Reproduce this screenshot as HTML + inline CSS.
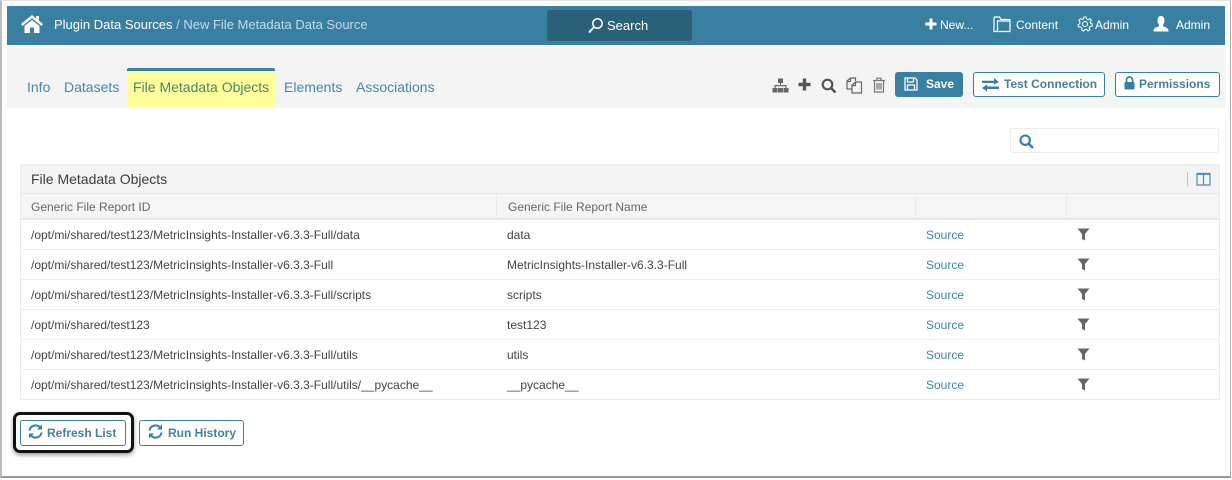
<!DOCTYPE html>
<html><head><meta charset="utf-8">
<style>
html,body{margin:0;padding:0;background:#fff}
body{width:1232px;height:480px;position:relative;overflow:hidden;font-family:"Liberation Sans",sans-serif}
.a{position:absolute;white-space:nowrap}
svg{position:absolute;display:block}
.tab{position:absolute;top:78px;font-size:14px;line-height:18px;color:#4a86a6;white-space:nowrap}
.hd{position:absolute;top:17px;font-size:12px;line-height:16px;color:#fff;white-space:nowrap}
.btn{position:absolute;box-sizing:border-box;border:1px solid #3a7f9f;border-radius:3px;background:#fff;color:#4b7f98;font-weight:bold;font-size:12px;white-space:nowrap}
.row{position:absolute;left:21px;width:1198px;height:29px;border-bottom:1px solid #eee;font-size:12px;line-height:31px;color:#444}
.row span{position:absolute;top:0;white-space:nowrap}
.row .s{left:905px;color:#3f84a8}
.row .i{left:10px}
.row .n{left:486px}
</style></head><body>
<div class="a" style="left:0;top:0;width:1231px;height:478px;box-sizing:border-box;border:1px solid #d8d8d8;border-left:2px solid #bbb;border-right:1px solid #aaa;border-bottom:2px solid #999;border-top:1px solid #e4e4e4"></div>
<div class="a" style="left:7px;top:6px;width:1218px;height:39px;background:#387fa1"></div>
<div class="a" style="left:7px;top:45px;width:1218px;height:63px;background:#f4f4f4"></div>

<svg style="left:21px;top:15px" width="22" height="18" viewBox="0 0 22 18"><path d="M11 0 L0 9 L1.500 11 L11 3.200 L20.500 11 L22 9 L18 5.800 V1 H15.200 V3.500 Z" fill="#fff"/><path d="M3.500 11 L11 5 L18.500 11 V18 H13 V12.500 H9 V18 H3.500 Z" fill="#fff"/></svg>
<div class="a" style="left:54px;top:16px;font-size:13px;line-height:18px;color:#fff">Plugin Data Sources<span style="color:#c5dbe6"> / New File Metadata Data Source</span></div>

<div class="a" style="left:547px;top:10px;width:145px;height:31px;background:#2b6079;border-radius:3px"></div>
<svg style="left:587px;top:17px" width="17" height="17" viewBox="0 0 17 17" fill="none" stroke="#fff"><circle cx="10.500" cy="6.500" r="4.700" stroke-width="1.500"/><path d="M7 10 L2 15.500" stroke-width="2"/></svg>
<div class="a" style="left:607px;top:17px;font-size:13px;line-height:17px;color:#fff">Search</div>

<svg style="left:925px;top:18px" width="12" height="12" viewBox="0 0 12 12"><path d="M4.500 0.500H7.500V4.500H11.500V7.500H7.500V11.500H4.500V7.500H0.500V4.500H4.500Z" fill="#fff"/></svg>
<div class="hd" style="left:940px">New...</div>
<svg style="left:993px;top:16px" width="20" height="17" viewBox="0 0 20 17" fill="none" stroke="#fff" stroke-width="1.200"><path d="M1 15.500V2.500Q1 1 2.500 1H6.500L8 3.500H17V15.500Z"/><path d="M4.500 15.500V5H17"/></svg>
<div class="hd" style="left:1016px">Content</div>
<svg style="left:1077px;top:16px" width="16" height="16" viewBox="0 0 16 16" fill="none" stroke="#fff"><circle cx="8" cy="8" r="2.500" stroke-width="1.100"/><path d="M6.800 1H9.200L9.600 3L11.200 3.700L13 2.600L14.400 4.300L13.100 5.900L13.600 7.400L15.300 8L15 10.300L13 10.500L12.100 12L12.900 13.800L11 15L9.600 13.500H8L6.600 15L4.700 14.100L5 12.200L3.700 11L1.500 11L1 8.700L2.800 7.800L3 6L1.900 4.300L3.500 2.700L5.200 3.500L6.500 2.800Z" stroke-width="1"/></svg>
<div class="hd" style="left:1095px">Admin</div>
<svg style="left:1153px;top:16px" width="16" height="16" viewBox="0 0 16 16"><path d="M8 0C5.500 0 4.500 2 4.500 4.500C4.500 6.500 5.500 8 6 8.800V10.200C4 11 0.800 11.700 0.500 14.500V15.500H15.500V14.500C15.200 11.700 12 11 10 10.200V8.800C10.500 8 11.500 6.500 11.500 4.500C11.500 2 10.500 0 8 0Z" fill="#fff"/></svg>
<div class="hd" style="left:1176px">Admin</div>

<div class="a" style="left:127px;top:69px;width:148px;height:38px;background:#ffff99"></div>
<div class="a" style="left:127px;top:68px;width:148px;height:3px;background:#387fa1;border-radius:2px 2px 0 0"></div>
<div class="tab" style="left:27px">Info</div>
<div class="tab" style="left:64px">Datasets</div>
<div class="tab" style="left:133px;color:#4a8570">File Metadata Objects</div>
<div class="tab" style="left:284px">Elements</div>
<div class="tab" style="left:356px">Associations</div>

<svg style="left:772px;top:78px" width="17" height="15" viewBox="0 0 17 15" fill="#666"><rect x="6" y="0.500" width="5" height="4.500"/><rect x="8" y="5" width="1" height="3"/><rect x="2.500" y="7" width="12" height="1.200"/><rect x="2.500" y="7" width="1.200" height="3"/><rect x="13.300" y="7" width="1.200" height="3"/><rect x="0.500" y="10" width="5" height="4.500"/><rect x="6" y="10" width="5" height="4.500"/><rect x="11.500" y="10" width="5" height="4.500"/></svg>
<svg style="left:798px;top:78px" width="13" height="13" viewBox="0 0 13 13"><path d="M4.800 0.500H8.200V4.800H12.500V8.200H8.200V12.500H4.800V8.200H0.500V4.800H4.800Z" fill="#555"/></svg>
<svg style="left:821px;top:78px" width="16" height="15" viewBox="0 0 16 15" fill="none" stroke="#555"><circle cx="6.500" cy="6.500" r="4.800" stroke-width="2.200"/><path d="M10 10L14.500 14.500" stroke-width="2.600"/></svg>
<svg style="left:846px;top:77px" width="17" height="17" viewBox="0 0 17 17" fill="none" stroke="#666" stroke-width="1.200"><path d="M6 12H1V4L4.500 1H9.500V4"/><path d="M4.500 1V4.500H1"/><path d="M6 16V8L9.500 5H15.500V16Z"/><path d="M9.500 5V8.500H6"/></svg>
<svg style="left:872px;top:77px" width="14" height="16" viewBox="0 0 14 16" fill="none" stroke="#777" stroke-width="1.200"><path d="M1 3.500H13M5 3V1.200H9V3M2.500 3.500V15H11.500V3.500M5 6V12.500M7 6V12.500M9 6V12.500"/></svg>

<div class="a" style="left:895px;top:72px;width:68px;height:25px;background:#387fa1;border-radius:3px"></div>
<svg style="left:904px;top:77px" width="14" height="14" viewBox="0 0 14 14" fill="none" stroke="#fff" stroke-width="1.300"><path d="M1 1H11L13 3V13H1Z"/><path d="M3.500 1V5H9.500V1M3.500 13V8H10.500V13"/></svg>
<div class="a" style="left:926px;top:77px;font-size:12px;line-height:15px;font-weight:bold;color:#fff">Save</div>

<div class="btn" style="left:973px;top:72px;width:132px;height:25px;line-height:22px;padding-left:30px">Test Connection</div>
<svg style="left:982px;top:78px" width="17" height="14" viewBox="0 0 17 14" fill="#387fa1"><path d="M0 3.200H12V0.500L17 4.500L12 7V5.500H0Z" transform="translate(0,-0.500)"/><path d="M17 8.500H5V6.500L0 10L5 13.500V11H17Z"/></svg>
<div class="btn" style="left:1115px;top:72px;width:105px;height:25px;line-height:22px;padding-left:23px">Permissions</div>
<svg style="left:1124px;top:76px" width="11" height="14" viewBox="0 0 11 14"><path d="M2.500 6V4A3 3 0 0 1 8.500 4V6" fill="none" stroke="#387fa1" stroke-width="1.700"/><rect x="0.500" y="6" width="10" height="7.500" rx="1" fill="#387fa1"/></svg>

<div class="a" style="left:1010px;top:128px;width:209px;height:25px;box-sizing:border-box;border:1px solid #eee;border-radius:2px"></div>
<svg style="left:1019px;top:134px" width="15" height="15" viewBox="0 0 15 15" fill="none" stroke="#387fa1"><circle cx="6.200" cy="6.200" r="4.700" stroke-width="2.100"/><path d="M9.500 9.500L14 14" stroke-width="2.500"/></svg>

<div class="a" style="left:20px;top:164px;width:1200px;height:236px;box-sizing:border-box;border:1px solid #ececec"></div>
<div class="a" style="left:21px;top:165px;width:1198px;height:28px;background:#f3f3f3;border-bottom:1px solid #e8e8e8"></div>
<div class="a" style="left:31px;top:170px;font-size:14px;line-height:18px;color:#3d3d3d">File Metadata Objects</div>
<div class="a" style="left:1187px;top:172px;width:1px;height:14px;background:#c4c4c4"></div>
<svg style="left:1196px;top:172px" width="15" height="14" viewBox="0 0 15 14" fill="none" stroke="#4b8db0" stroke-width="1.200"><path d="M1 1.500H14V13H1ZM7.500 1.500V13"/><path d="M1 2H14" stroke-width="1.800"/></svg>

<div class="a" style="left:21px;top:194px;width:1198px;height:24px;background:#f5f5f5;border-bottom:2px solid #e6e6e6"></div>
<div class="a" style="left:496px;top:194px;width:1px;height:24px;background:#ebebeb"></div>
<div class="a" style="left:915px;top:194px;width:1px;height:24px;background:#ebebeb"></div>
<div class="a" style="left:1066px;top:194px;width:1px;height:24px;background:#ebebeb"></div>
<div class="a" style="left:31px;top:199px;font-size:12px;line-height:16px;color:#666">Generic File Report ID</div>
<div class="a" style="left:508px;top:199px;font-size:12px;line-height:16px;color:#666">Generic File Report Name</div>

<div class="row" style="top:220px"><span class="i">/opt/mi/shared/test123/MetricInsights-Installer-v6.3.3-Full/data</span><span class="n">data</span><span class="s">Source</span></div>
<div class="row" style="top:250px"><span class="i">/opt/mi/shared/test123/MetricInsights-Installer-v6.3.3-Full</span><span class="n">MetricInsights-Installer-v6.3.3-Full</span><span class="s">Source</span></div>
<div class="row" style="top:280px"><span class="i">/opt/mi/shared/test123/MetricInsights-Installer-v6.3.3-Full/scripts</span><span class="n">scripts</span><span class="s">Source</span></div>
<div class="row" style="top:310px"><span class="i">/opt/mi/shared/test123</span><span class="n">test123</span><span class="s">Source</span></div>
<div class="row" style="top:340px"><span class="i">/opt/mi/shared/test123/MetricInsights-Installer-v6.3.3-Full/utils</span><span class="n">utils</span><span class="s">Source</span></div>
<div class="row" style="top:370px;border-bottom:none"><span class="i">/opt/mi/shared/test123/MetricInsights-Installer-v6.3.3-Full/utils/__pycache__</span><span class="n">__pycache__</span><span class="s">Source</span></div>

<svg style="left:1077px;top:228px" width="13" height="13" viewBox="0 0 13 13"><path d="M0.500 0.500H12.500L8 6V12.500L5 11V6Z" fill="#666"/></svg>
<svg style="left:1077px;top:258px" width="13" height="13" viewBox="0 0 13 13"><path d="M0.500 0.500H12.500L8 6V12.500L5 11V6Z" fill="#666"/></svg>
<svg style="left:1077px;top:288px" width="13" height="13" viewBox="0 0 13 13"><path d="M0.500 0.500H12.500L8 6V12.500L5 11V6Z" fill="#666"/></svg>
<svg style="left:1077px;top:318px" width="13" height="13" viewBox="0 0 13 13"><path d="M0.500 0.500H12.500L8 6V12.500L5 11V6Z" fill="#666"/></svg>
<svg style="left:1077px;top:348px" width="13" height="13" viewBox="0 0 13 13"><path d="M0.500 0.500H12.500L8 6V12.500L5 11V6Z" fill="#666"/></svg>
<svg style="left:1077px;top:378px" width="13" height="13" viewBox="0 0 13 13"><path d="M0.500 0.500H12.500L8 6V12.500L5 11V6Z" fill="#666"/></svg>

<div class="a" style="left:13px;top:412px;width:121px;height:41px;box-sizing:border-box;border:3px solid #111;border-radius:7px;box-shadow:0 2px 4px rgba(0,0,0,.4)"></div>
<div class="btn" style="left:20px;top:420px;width:106px;height:26px;line-height:24px;padding-left:26px">Refresh List</div>
<svg style="left:28px;top:424px" width="15" height="15" viewBox="0 0 15 15" fill="none" stroke="#387fa1" stroke-width="2"><path d="M1.500 6.500A6 6 0 0 1 12 3.500"/><path d="M13.500 8.500A6 6 0 0 1 3 11.500"/><path d="M14 0.500V5.500H9Z" fill="#387fa1" stroke="none"/><path d="M1 14.500V9.500H6Z" fill="#387fa1" stroke="none"/></svg>
<div class="btn" style="left:139px;top:420px;width:105px;height:26px;line-height:24px;padding-left:28px">Run History</div>
<svg style="left:148px;top:424px" width="15" height="15" viewBox="0 0 15 15" fill="none" stroke="#387fa1" stroke-width="2"><path d="M1.500 6.500A6 6 0 0 1 12 3.500"/><path d="M13.500 8.500A6 6 0 0 1 3 11.500"/><path d="M14 0.500V5.500H9Z" fill="#387fa1" stroke="none"/><path d="M1 14.500V9.500H6Z" fill="#387fa1" stroke="none"/></svg>
</body></html>
